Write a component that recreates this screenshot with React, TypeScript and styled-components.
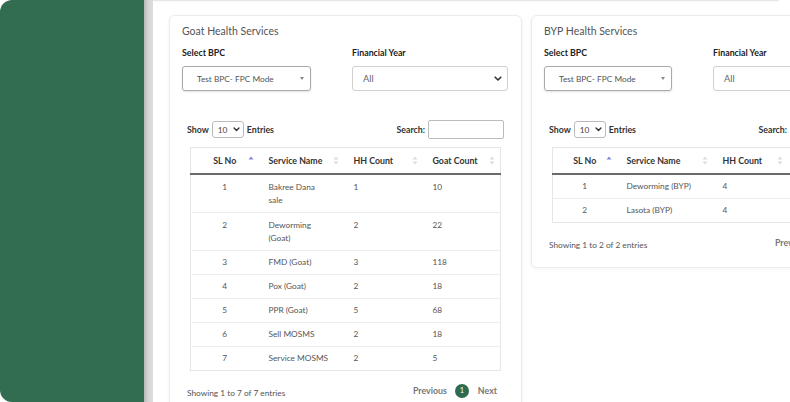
import React from 'react';
import styled, { createGlobalStyle } from 'styled-components';

const GlobalStyle = createGlobalStyle`
  html, body {
    margin: 0;
    padding: 0;
    background: #fff;
  }
  body {
    font-family: Lato, "Noto Sans", sans-serif;
  }
`;

const Frame = styled.div`
  display: flex;
  width: 790px;
  height: 402px;
  overflow: hidden;
  border-radius: 12px;
  background: #fff;
`;

const Sidebar = styled.aside`
  flex: 0 0 144px;
  background: #326d51;
`;

const SidebarShade = styled.div`
  flex: 0 0 9px;
  background: linear-gradient(to right, #b8b8b8, #d4d4d4 45%, #dddddd);
`;

const Main = styled.main`
  flex: 1;
  min-width: 0;
  display: flex;
  flex-direction: column;
`;

const TopBar = styled.div`
  height: 2px;
  margin-right: 11px;
  border-bottom: 1px solid #e6e6e6;
  border-bottom-right-radius: 6px;
  box-shadow: 0 1px 3px rgba(0, 0, 0, 0.06);
`;

const Content = styled.div`
  display: flex;
  align-items: flex-start;
  gap: 9px;
  padding: 14px 0 0 16px;
`;

const Card = styled.section`
  flex: 0 0 352px;
  box-sizing: border-box;
  padding: 8px 12px 16px;
  background: #fff;
  border: 1px solid #ebebeb;
  border-radius: 6px;
  box-shadow: 0 1px 4px rgba(0, 0, 0, 0.05);
`;

const CardTitle = styled.h3`
  margin: 0;
  font-size: 10.5px;
  line-height: 14px;
  font-weight: 400;
  color: #555;
`;

const Filters = styled.div<{ $cols: string }>`
  display: grid;
  grid-template-columns: ${(p) => p.$cols};
  margin-top: 9px;
`;

const Field = styled.div`
  display: flex;
  flex-direction: column;
  align-items: flex-start;
`;

const FieldLabel = styled.label`
  font-size: 8.8px;
  line-height: 12px;
  font-weight: 700;
  color: #222;
  margin-bottom: 7px;
`;

const BpcSelect = styled.div<{ $width: number }>`
  box-sizing: border-box;
  width: ${(p) => p.$width}px;
  height: 25px;
  display: flex;
  align-items: center;
  justify-content: space-between;
  padding: 0 6px 0 14px;
  border: 1px solid #aaa;
  border-radius: 3px;
  box-shadow: 0 1px 2px rgba(0, 0, 0, 0.12);
  font-size: 8.3px;
  color: #555;
`;

const Caret = styled.span`
  width: 0;
  height: 0;
  border-left: 2.5px solid transparent;
  border-right: 2.5px solid transparent;
  border-top: 3px solid #888;
`;

const YearSelect = styled.div`
  box-sizing: border-box;
  width: 100%;
  height: 25px;
  display: flex;
  align-items: center;
  justify-content: space-between;
  padding: 0 5px 0 10px;
  border: 1px solid #d0d0d0;
  border-radius: 3px;
  font-size: 9.3px;
  color: #666;
`;

const Toolbar = styled.div`
  display: flex;
  align-items: center;
  justify-content: space-between;
  height: 19px;
  margin-top: 29px;
  padding: 0 5px;
`;

const ToolLabel = styled.div`
  display: flex;
  align-items: center;
  gap: 3px;
  font-size: 8.8px;
  font-weight: 700;
  color: #333;
`;

const LengthSelect = styled.div`
  box-sizing: border-box;
  width: 32px;
  height: 17px;
  display: flex;
  align-items: center;
  justify-content: space-between;
  padding: 0 3px 0 5px;
  border: 1px solid #bbb;
  border-radius: 3px;
  font-size: 8.3px;
  font-weight: 400;
  color: #444;
`;

const SearchBox = styled.div`
  box-sizing: border-box;
  width: 76px;
  height: 19px;
  border: 1px solid #bbb;
  border-radius: 2px;
`;

const Table = styled.table<{ $width: number }>`
  width: ${(p) => p.$width}px;
  margin: 8px 8px 0;
  table-layout: fixed;
  border-collapse: collapse;
  border: 1px solid #e6e6e6;
`;

const HeadCell = styled.th<{ $align: string }>`
  position: relative;
  height: 25px;
  padding: 0 10px;
  text-align: ${(p) => p.$align};
  font-size: 8.8px;
  font-weight: 700;
  color: #333;
  border-bottom: 2px solid #6a6a6a;
  white-space: nowrap;
`;

const SortMark = styled.svg`
  position: absolute;
  right: 5px;
  top: 50%;
  margin-top: -4.5px;
`;

const Cell = styled.td<{ $align: string; $tall: boolean }>`
  padding: ${(p) => (p.$tall ? '6px 10px 5px' : '5px 10px')};
  text-align: ${(p) => p.$align};
  vertical-align: top;
  font-size: 8.3px;
  line-height: 13px;
  color: #555;
  border-top: 1px solid #ececec;
  white-space: nowrap;
`;

const Footer = styled.div`
  display: flex;
  align-items: flex-start;
  justify-content: space-between;
  margin-top: 13px;
  padding: 0 12px 0 5px;
`;

const Info = styled.div`
  margin-top: 3px;
  font-size: 8.3px;
  line-height: 12px;
  color: #555;
`;

const Pager = styled.div`
  display: flex;
  align-items: center;
  height: 14px;
  font-size: 8.8px;
  font-weight: 700;
  color: #777;
`;

const PageLink = styled.span`
  line-height: 14px;
`;

const PageNumber = styled.span`
  width: 14px;
  height: 14px;
  margin: 0 9px 0 8px;
  border-radius: 50%;
  background: #2f6b4f;
  color: #fff;
  font-size: 7.5px;
  font-weight: 400;
  line-height: 14px;
  text-align: center;
`;

const Chevron = ({ size = 8 }: { size?: number }) => (
  <svg width={size} height={size * 0.7} viewBox="0 0 10 7">
    <path d="M1.5 1.5 L5 5 L8.5 1.5" fill="none" stroke="#333" strokeWidth="2" strokeLinecap="round" strokeLinejoin="round" />
  </svg>
);

const Sort = ({ active }: { active?: boolean }) => (
  <SortMark width="6" height="9" viewBox="0 0 6 9">
    <path d="M0.5 3.5 L3 0.5 L5.5 3.5 Z" fill={active ? '#8085d6' : '#dcdcdc'} />
    {!active && <path d="M0.5 5.5 L3 8.5 L5.5 5.5 Z" fill="#dcdcdc" />}
  </SortMark>
);

interface Column {
  label: string;
  width: number;
  align: 'left' | 'center';
}

interface HealthCardProps {
  title: string;
  bpcWidth: number;
  filterCols: string;
  columns: Column[];
  rows: string[][][];
  total: number;
}

const HealthCard = ({ title, bpcWidth, filterCols, columns, rows, total }: HealthCardProps) => {
  const tableWidth = columns.reduce((sum, c) => sum + c.width, 0);
  return (
    <Card>
      <CardTitle>{title}</CardTitle>
      <Filters $cols={filterCols}>
        <Field>
          <FieldLabel>Select BPC</FieldLabel>
          <BpcSelect $width={bpcWidth}>
            Test BPC- FPC Mode
            <Caret />
          </BpcSelect>
        </Field>
        <Field>
          <FieldLabel>Financial Year</FieldLabel>
          <YearSelect>
            All
            <Chevron />
          </YearSelect>
        </Field>
      </Filters>
      <Toolbar>
        <ToolLabel>
          Show
          <LengthSelect>
            10
            <Chevron size={7} />
          </LengthSelect>
          Entries
        </ToolLabel>
        <ToolLabel>
          Search:
          <SearchBox />
        </ToolLabel>
      </Toolbar>
      <Table $width={tableWidth}>
        <colgroup>
          {columns.map((c) => (
            <col key={c.label} style={{ width: c.width }} />
          ))}
        </colgroup>
        <thead>
          <tr>
            {columns.map((c, i) => (
              <HeadCell key={c.label} $align={c.align}>
                {c.label}
                <Sort active={i === 0} />
              </HeadCell>
            ))}
          </tr>
        </thead>
        <tbody>
          {rows.map((row, r) => {
            const tall = row.some((lines) => lines.length > 1);
            return (
              <tr key={r}>
                {row.map((lines, i) => (
                  <Cell key={i} $align={columns[i].align} $tall={tall}>
                    {lines.map((line, l) => (
                      <div key={l}>{line}</div>
                    ))}
                  </Cell>
                ))}
              </tr>
            );
          })}
        </tbody>
      </Table>
      <Footer>
        <Info>Showing 1 to {total} of {total} entries</Info>
        <Pager>
          <PageLink>Previous</PageLink>
          <PageNumber>1</PageNumber>
          <PageLink>Next</PageLink>
        </Pager>
      </Footer>
    </Card>
  );
};

const goatColumns: Column[] = [
  { label: 'SL No', width: 68, align: 'center' },
  { label: 'Service Name', width: 85, align: 'left' },
  { label: 'HH Count', width: 79, align: 'left' },
  { label: 'Goat Count', width: 78, align: 'left' },
];

const goatRows = [
  [['1'], ['Bakree Dana', 'sale'], ['1'], ['10']],
  [['2'], ['Deworming', '(Goat)'], ['2'], ['22']],
  [['3'], ['FMD (Goat)'], ['3'], ['118']],
  [['4'], ['Pox (Goat)'], ['2'], ['18']],
  [['5'], ['PPR (Goat)'], ['5'], ['68']],
  [['6'], ['Sell MOSMS'], ['2'], ['18']],
  [['7'], ['Service MOSMS'], ['2'], ['5']],
];

const bypColumns: Column[] = [
  { label: 'SL No', width: 64, align: 'center' },
  { label: 'Service Name', width: 96, align: 'left' },
  { label: 'HH Count', width: 75, align: 'left' },
  { label: 'Bird Count', width: 75, align: 'left' },
];

const bypRows = [
  [['1'], ['Deworming (BYP)'], ['4'], ['40']],
  [['2'], ['Lasota (BYP)'], ['4'], ['35']],
];

const App = () => (
  <>
    <GlobalStyle />
    <Frame>
      <Sidebar />
      <SidebarShade />
      <Main>
        <TopBar />
        <Content>
          <HealthCard
            title="Goat Health Services"
            bpcWidth={129}
            filterCols="170px 156px"
            columns={goatColumns}
            rows={goatRows}
            total={7}
          />
          <HealthCard
            title="BYP Health Services"
            bpcWidth={128}
            filterCols="169px 157px"
            columns={bypColumns}
            rows={bypRows}
            total={2}
          />
        </Content>
      </Main>
    </Frame>
  </>
);

export default App;
